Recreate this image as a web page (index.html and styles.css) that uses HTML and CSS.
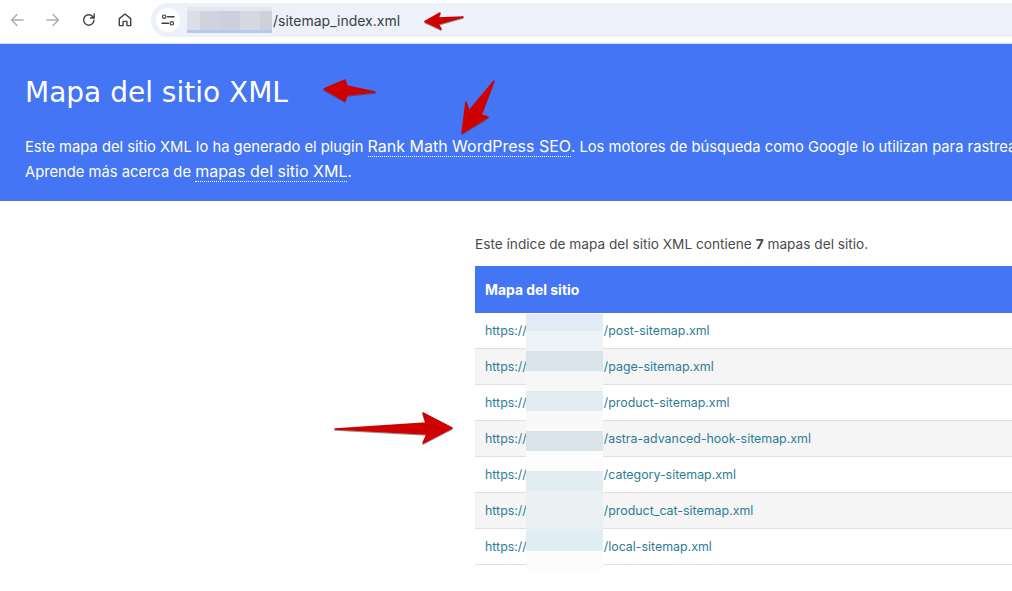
FILE: index.html
```html
<!DOCTYPE html>
<html lang="es">
<head>
<meta charset="utf-8">
<title>Mapa del sitio XML</title>
<link rel="stylesheet" href="styles.css">
</head>
<body>
<div class="page">
  <div class="toolbar">
    <div class="nav">
      <svg class="icon" viewBox="0 0 16 16"><path class="dim" d="M14 8H2.500M8 2.500 2.500 8 8 13.500"/></svg>
      <svg class="icon" viewBox="0 0 16 16"><path class="dim" d="M2 8h11.500M8 2.500 13.500 8 8 13.500"/></svg>
      <svg class="icon" viewBox="0 0 16 16"><path class="dark" d="M13 8.300A5.200 5.200 0 1 1 11.600 4.400L13.200 6M13.200 2v4H9.400"/></svg>
      <svg class="icon" viewBox="0 0 16 16"><path class="dark" d="M2.300 13.600V6.600L8 2l5.700 4.600v7H9.900V9.400H6.100v4.200z"/></svg>
    </div>
    <div class="address">
      <div class="site-btn">
        <svg class="tune" viewBox="0 0 14 14"><path class="dark heavy" d="M6.500 3.700h6.500M1 10.300h6.500"/><circle class="dark thin" cx="3.200" cy="3.700" r="1.700"/><circle class="dark thin" cx="10.800" cy="10.300" r="1.700"/></svg>
      </div>
      <span class="host-mask"></span>
      <span class="url">/sitemap_index.xml</span>
    </div>
  </div>

  <header class="banner">
    <h1 class="title">Mapa del sitio XML</h1>
    <p class="intro">Este mapa del sitio XML lo ha generado el plugin <a class="intro-link" href="#">Rank Math WordPress SEO</a>. Los motores de búsqueda como Google lo utilizan para rastrear tu sitio.</p>
    <p class="intro">Aprende más acerca de <a class="intro-link" href="#">mapas del sitio XML</a>.</p>
  </header>

  <main class="content">
    <p class="summary">Este índice de mapa del sitio XML contiene <strong>7</strong> mapas del sitio.</p>
    <table class="sitemaps">
      <thead><tr><th>Mapa del sitio</th></tr></thead>
      <tbody>
        <tr><td><a href="#">https://<span class="host"></span>/post-sitemap.xml</a></td></tr>
        <tr><td><a href="#">https://<span class="host"></span>/page-sitemap.xml</a></td></tr>
        <tr><td><a href="#">https://<span class="host"></span>/product-sitemap.xml</a></td></tr>
        <tr><td><a href="#">https://<span class="host"></span>/astra-advanced-hook-sitemap.xml</a></td></tr>
        <tr><td><a href="#">https://<span class="host"></span>/category-sitemap.xml</a></td></tr>
        <tr><td><a href="#">https://<span class="host"></span>/product_cat-sitemap.xml</a></td></tr>
        <tr><td><a href="#">https://<span class="host"></span>/local-sitemap.xml</a></td></tr>
      </tbody>
    </table>
  </main>

  <div class="blur-mask"></div>

  <svg class="annotations" viewBox="0 0 1012 591">
    <defs>
      <filter id="arrow-shadow" x="-20%" y="-20%" width="140%" height="140%">
        <feDropShadow dx="0" dy="1" stdDeviation="0.6" flood-color="#333" flood-opacity="0.55"/>
      </filter>
    </defs>
    <g class="arrow" filter="url(#arrow-shadow)">
      <path d="M425 21.500 440 13 438 18 463 17 438 24 441 29z"/>
      <path d="M324 89 345 80 347 86 375 92 347 95 345 101z"/>
      <path d="M462 133 466 102 469 111 494 81 481 115 488 117z"/>
      <path d="M335 429 426 423 423 413 452 428 423 443 427 434z"/>
    </g>
  </svg>
</div>
</body>
</html>
```

FILE: styles.css
```css
* {
  box-sizing: border-box;
}

html,
body {
  margin: 0;
  height: 100%;
  overflow: hidden;
  background: #fff;
}

.page {
  position: relative;
  width: 1012px;
  height: 591px;
  overflow: hidden;
  font-family: Inter, "Liberation Sans", sans-serif;
}

/* Browser toolbar */
.toolbar {
  display: flex;
  align-items: flex-start;
  height: 44px;
  padding: 3px 0 0 9px;
  background: #fff;
  border-bottom: 1px solid #cfdcf8;
}

.nav {
  display: flex;
  align-items: center;
  gap: 20px;
  height: 34px;
  width: 142px;
  flex: none;
}

.icon {
  width: 16px;
  height: 16px;
  flex: none;
}

.dim,
.dark {
  fill: none;
  stroke-width: 1.4;
  stroke-linecap: round;
  stroke-linejoin: round;
}

.dim {
  stroke: #a9acb0;
}

.dark {
  stroke: #3c4043;
}

.thin {
  stroke-width: 1.2;
}

.heavy {
  stroke-width: 1.5;
}

.address {
  display: flex;
  align-items: center;
  flex: 1;
  height: 34px;
  padding-left: 5px;
  background: #ecf1fa;
  border-radius: 17px 0 0 17px;
}

.site-btn {
  display: flex;
  align-items: center;
  justify-content: center;
  width: 24px;
  height: 24px;
  margin-right: 7px;
  border-radius: 50%;
  background: #fff;
}

.tune {
  width: 14px;
  height: 14px;
}

.host-mask {
  width: 85px;
  height: 26px;
  background:
    linear-gradient(#e4e7ef 0 4px, transparent 4px) top / 100% 100% no-repeat,
    linear-gradient(to bottom, transparent 23px, #b5c9ef 23px) top / 100% 100% no-repeat,
    linear-gradient(to right, #dcdfe8 0 13px, #cfd3dd 13px 33px, #ccd0da 33px 53px, #d4d8e1 53px 73px, #cdd1db 73px);
}

.url {
  margin-left: 1px;
  font-size: 14px;
  color: #3c4043;
  white-space: nowrap;
}

/* Blue banner */
.banner {
  height: 157px;
  padding: 30px 25px 0;
  background: #4475f5;
  color: #fff;
  white-space: nowrap;
  overflow: hidden;
}

.title {
  margin: 0 0 22px;
  font-family: "DejaVu Sans", Verdana, sans-serif;
  font-size: 28px;
  font-weight: 400;
  line-height: 38px;
}

.intro {
  margin: 0;
  font-size: 14.75px;
  line-height: 24px;
}

.intro-link {
  font-size: 16px;
  color: #fff;
  text-decoration: none;
  border-bottom: 1px dotted #fff;
}

/* Sitemap table */
.content {
  padding: 33px 0 0 475px;
}

.summary {
  margin: 0 0 12px;
  font-size: 13.66px;
  line-height: 20px;
  color: #4b4b4b;
  white-space: nowrap;
}

.sitemaps {
  width: 537px;
  border-collapse: separate;
  border-spacing: 0;
  font-size: 12.4px;
}

.sitemaps th {
  height: 47px;
  padding: 0 10px;
  background: #4475f5;
  color: #fff;
  font-size: 13.9px;
  font-weight: 700;
  text-align: left;
}

.sitemaps td {
  height: 36px;
  padding: 0 10px;
  border-bottom: 1px solid #dfdfdf;
}

.sitemaps tbody tr:nth-child(even) {
  background: #f5f5f5;
}

.sitemaps a {
  display: flex;
  color: #2c7c95;
  text-decoration: none;
  white-space: nowrap;
}

.host {
  width: 77px;
  flex: none;
}

/* Pixelated cover over the domain names */
.blur-mask {
  position: absolute;
  left: 526px;
  top: 314px;
  width: 77px;
  height: 257px;
  background: linear-gradient(
    #e2ebf5 0 17px,
    #edf3f6 17px 37px,
    #d9e4ea 37px 57px,
    #f7f7f7 57px 77px,
    #e1ecf1 77px 97px,
    #f9f9f9 97px 117px,
    #d9e4ea 117px 137px,
    #fdfdfd 137px 157px,
    #e2edf2 157px 177px,
    #ebf1f3 177px 197px,
    #e9f0f2 197px 217px,
    #e0edf2 217px 237px,
    #fcfcfc 237px
  );
}

/* Red annotation arrows */
.annotations {
  position: absolute;
  inset: 0;
  width: 1012px;
  height: 591px;
  pointer-events: none;
}

.arrow path {
  fill: #cf0000;
  stroke: #cf0000;
  stroke-width: 1.5;
  stroke-linejoin: round;
}
```
